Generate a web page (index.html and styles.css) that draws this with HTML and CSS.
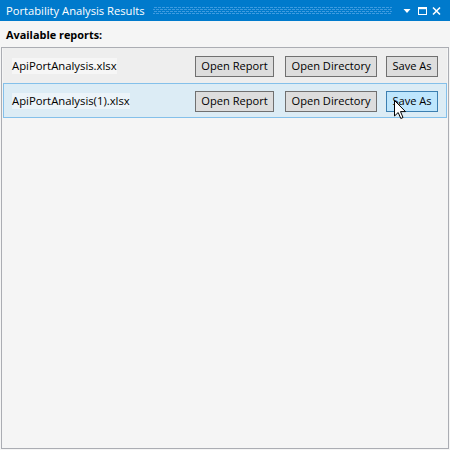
FILE: index.html
```html
<!DOCTYPE html>
<html>
<head>
<meta charset="utf-8">
<link rel="stylesheet" href="styles.css">
</head>
<body>
<div class="window">
  <div class="titlebar">
    <span class="title">Portability Analysis Results</span>
    <span class="grip"></span>
    <span class="tb-icons">
      <svg class="tb-icon tb-drop" width="8" height="10" viewBox="0 0 8 10"><polygon points="0.5,3 7.5,3 4,7" fill="#fff"/></svg>
      <svg class="tb-icon tb-max" width="9" height="10" viewBox="0 0 9 10"><rect x="0.5" y="1.5" width="8" height="7" fill="none" stroke="#fff" stroke-width="1"/><rect x="0" y="1" width="9" height="2.2" fill="#fff"/></svg>
      <svg class="tb-icon tb-close" width="9" height="10" viewBox="0 0 9 10"><path d="M1 1.5 L8 8.5 M8 1.5 L1 8.5" stroke="#fff" stroke-width="1.6"/></svg>
    </span>
  </div>
  <div class="content">
    <div class="label">Available reports:</div>
    <div class="list">
      <div class="row">
        <span class="name">ApiPortAnalysis.xlsx</span>
        <button class="btn btn-report">Open Report</button>
        <button class="btn btn-dir">Open Directory</button>
        <button class="btn btn-save">Save As</button>
      </div>
      <div class="row selected">
        <span class="name">ApiPortAnalysis(1).xlsx</span>
        <button class="btn btn-report">Open Report</button>
        <button class="btn btn-dir">Open Directory</button>
        <button class="btn btn-save hover">Save As</button>
      </div>
    </div>
  </div>
  <svg class="cursor" width="13" height="20" viewBox="0 0 13 20"><polygon points="0.5,0.5 0.5,16 4.2,12.5 6.8,18.5 9,17.5 6.5,11.6 11.5,11.6" fill="#fff" stroke="#000" stroke-width="1" stroke-linejoin="miter"/></svg>
</div>
</body>
</html>
```
FILE: styles.css
```css
html, body {
  margin: 0;
  padding: 0;
}
body {
  width: 450px;
  height: 450px;
  overflow: hidden;
  background: #f5f5f5;
  font-family: "Open Sans", "Noto Sans", sans-serif;
  font-size: 11.2px;
  color: #000;
}
.window {
  position: relative;
  width: 450px;
  height: 450px;
  display: flex;
  flex-direction: column;
}
.titlebar {
  height: 21px;
  background: #007acc;
  color: #fff;
  display: flex;
  align-items: center;
  padding-left: 6px;
  flex: none;
}
.title {
  font-size: 11.2px;
  white-space: nowrap;
}
.grip {
  flex: 1;
  height: 8px;
  margin: 1px 11px 0 8px;
  background:
    conic-gradient(from 90deg at 1px 1px, transparent 75%, #3f9be0 0) 0 0 / 4px 4px,
    conic-gradient(from 90deg at 1px 1px, transparent 75%, #3f9be0 0) 2px 2px / 4px 4px;
}
.tb-icons {
  display: flex;
  align-items: center;
  padding-right: 9px;
}
.tb-icon {
  display: block;
}
.tb-max { margin-left: 7px; }
.tb-close { margin-left: 5px; }
.content {
  flex: 1;
  display: flex;
  flex-direction: column;
  min-height: 0;
}
.label {
  height: 26px;
  line-height: 27px;
  padding-left: 6px;
  font-weight: bold;
  font-size: 10.9px;
  flex: none;
}
.list {
  flex: 1;
  margin: 0 1px 1px 1px;
  border: 1px solid #abadb3;
  padding: 0 1px;
}
.row {
  box-sizing: border-box;
  height: 35px;
  border: 1px solid #eeeeee;
  background: #eeeeee;
  display: flex;
  align-items: center;
  padding: 1px 8px 0 8px;
}
.row.selected {
  background: #dcecf5;
  border-color: #84c0ea;
}
.name {
  margin-right: auto;
  background: rgba(255, 255, 255, 0.45);
  line-height: 16px;
  font-size: 11.3px;
  white-space: nowrap;
}
.btn {
  box-sizing: border-box;
  height: 21px;
  border: 1px solid #707070;
  background: #dddddd;
  font-family: inherit;
  font-size: 11.1px;
  color: #000;
  padding: 0;
  margin: 0;
  border-radius: 0;
  line-height: 18px;
}
.btn-report { width: 79px; }
.btn-dir { width: 92px; margin-left: 11px; }
.btn-save { width: 52px; margin-left: 9px; }
.btn.hover {
  background: #bee6fd;
  border-color: #3c7fb1;
}
.cursor {
  position: absolute;
  left: 394px;
  top: 100px;
}
```
